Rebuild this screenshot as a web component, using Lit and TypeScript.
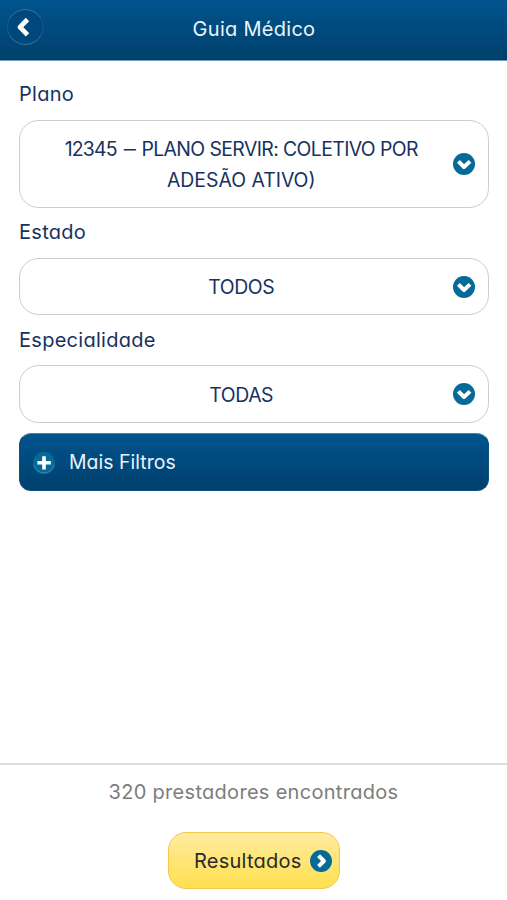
import { LitElement, html, css, svg } from "lit";
import { customElement, property } from "lit/decorators.js";

const chevronDown = svg`<path d="M5.4 8.4 L11 14 L17 8.4" fill="none" stroke="#fff" stroke-width="4" stroke-linejoin="round"/>`;
const chevronRight = svg`<path d="M8.5 5.6 L13.9 11 L8.5 16.4" fill="none" stroke="#fff" stroke-width="4" stroke-linejoin="round"/>`;
const plus = svg`<path d="M11 4.2 V17.4 M4.4 10.8 H17.8" fill="none" stroke="#fff" stroke-width="3.6"/>`;
const glyphs = { down: chevronDown, right: chevronRight, plus };

@customElement("round-icon")
export class RoundIcon extends LitElement {
  @property() name: keyof typeof glyphs = "down";

  static styles = css`
    :host { display: block; width: 22px; height: 22px; flex: none; }
    svg { display: block; }
    .disc { fill: #056a98; }
    .ring { fill: none; stroke: #3c8cb2; stroke-width: 0.9; }
  `;

  render() {
    return html`<svg width="22" height="22" viewBox="0 0 22 22">
      <circle class="disc" cx="11" cy="11" r="11"></circle>
      ${this.name === "plus" ? svg`<path class="ring" d="M0.8 13 A10.5 10.5 0 0 0 21.2 13"></path>` : ""}
      ${glyphs[this.name]}
    </svg>`;
  }
}

@customElement("app-root")
export class AppRoot extends LitElement {
  static styles = css`
    :host {
      display: flex;
      flex-direction: column;
      height: 900px;
      box-sizing: border-box;
      background: #fff;
      color: #17325f;
      font: 20px/31px "Inter", sans-serif;
      font-feature-settings: "cv11" 1;
      letter-spacing: 0.28px;
    }
    * { box-sizing: border-box; }
    header {
      height: 61px;
      flex: none;
      display: grid;
      grid-template-columns: 44px 1fr 43px;
      background: linear-gradient(#00548e, #00406c);
      border-bottom: 1px solid #6f9dbd;
    }
    .back { display: block; margin: 8px 0 0 7px; }
    .title { margin: 14px 0 0; text-align: center; color: #eaf4fc; font: inherit; }
    main { padding: 0 18.5px 0 19px; flex: 1; }
    .label { display: block; height: 58.5px; padding: 18px 0 0; white-space: nowrap; }
    .label.next { height: 50px; padding-top: 9.5px; }
    .field {
      display: flex;
      align-items: center;
      height: 57.5px;
      padding: 1px 13px 0 10px;
      border: 1px solid #cdcdcd;
      border-radius: 19.5px;
      font-size: 19.4px;
      letter-spacing: -0.42px;
    }
    .field.tall { height: 88px; }
    .value { flex: 1; padding-top: 2px; text-align: center; white-space: nowrap; }
    .code { letter-spacing: -0.8px; }
    .dash { display: inline-block; transform: scaleX(1.25); margin: 0 2.6px 0 2.8px; }
    .tight { letter-spacing: -0.6px; }
    .wide { letter-spacing: 0; }
    .more {
      display: flex;
      align-items: center;
      gap: 14px;
      width: 100%;
      height: 58px;
      margin-top: 10px;
      padding: 1px 13px 0;
      border: 1px solid #0d5082;
      border-top-color: #4b86ad;
      border-radius: 12px;
      background: linear-gradient(#00548e, #00406c);
      color: #eaf4fc;
      font: inherit;
      font-size: 19.4px;
      font-feature-settings: inherit;
      letter-spacing: 0.05px;
    }
    .more round-icon { margin-top: 1px; }
    footer {
      height: 137px;
      border-top: 2px solid #dedede;
      display: flex;
      flex-direction: column;
      align-items: center;
    }
    .count { margin: 12px 0 0; color: #7d7d7d; white-space: nowrap; letter-spacing: 0.3px; }
    .results {
      display: flex;
      align-items: center;
      justify-content: flex-end;
      gap: 8px;
      width: 172px;
      height: 57px;
      margin-top: 24px;
      padding: 1px 7px 0 0;
      border: 1px solid #f0c850;
      border-radius: 18px;
      background: linear-gradient(#ffeba0, #ffe04e);
      color: #292b28;
      font: inherit;
      font-feature-settings: inherit;
      letter-spacing: 0.24px;
    }
  `;

  render() {
    return html`
      <header>
        <svg class="back" width="37" height="38" viewBox="0 0 37 38">
          <circle cx="18.3" cy="19" r="18" fill="#00487b"></circle>
          <path d="M3 10 A18 18 0 0 1 33.6 10 M33.6 28 A18 18 0 0 1 3 28" fill="none" stroke="#3a7aa5" stroke-width="0.9"></path>
          <path d="M3 10 A18 18 0 0 0 3 28 M33.6 10 A18 18 0 0 1 33.6 28" fill="none" stroke="#1d639a" stroke-width="0.8"></path>
          <path d="M20.5 11.5 L13 19.2 L20.5 26.9" fill="none" stroke="#fff" stroke-width="4.8" stroke-linejoin="round"></path>
        </svg>
        <h1 class="title">Guia Médico</h1>
      </header>
      <main>
        <label class="label">Plano</label>
        <div class="field tall">
          <div class="value"><span class="code">12345</span> <span class="dash">–</span> <span class="tight">PLANO SERVIR: COLETIVO POR</span><br><span class="wide">ADESÃO ATIVO)</span></div>
          <round-icon name="down"></round-icon>
        </div>
        <label class="label next">Estado</label>
        <div class="field"><div class="value">TODOS</div><round-icon name="down"></round-icon></div>
        <label class="label next">Especialidade</label>
        <div class="field"><div class="value">TODAS</div><round-icon name="down"></round-icon></div>
        <button class="more"><round-icon name="plus"></round-icon><span>Mais Filtros</span></button>
      </main>
      <footer>
        <p class="count">320 prestadores encontrados</p>
        <button class="results"><span>Resultados</span><round-icon name="right"></round-icon></button>
      </footer>
    `;
  }
}
